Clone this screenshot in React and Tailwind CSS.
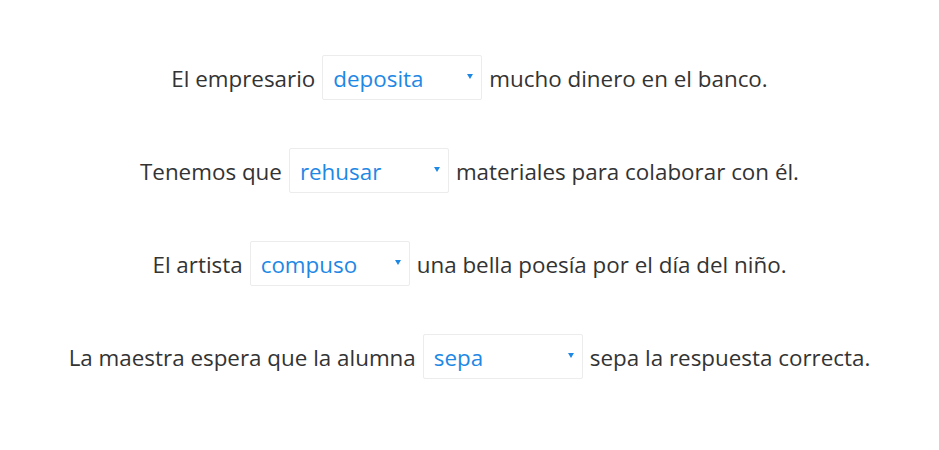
const ROWS = [
  { before: 'El empresario', value: 'deposita', after: 'mucho dinero en el banco.' },
  { before: 'Tenemos que', value: 'rehusar', after: 'materiales para colaborar con él.' },
  { before: 'El artista', value: 'compuso', after: 'una bella poesía por el día del niño.' },
  { before: 'La maestra espera que la alumna', value: 'sepa', after: 'sepa la respuesta correcta.' },
];

const Select = ({ value }) => (
  <div className="relative w-[160px] h-[45px] flex items-center pl-[10px] pt-[3px] border border-[#ececec] rounded-[2px] bg-white text-[#1e88e5]">
    <span>{value}</span>
    <svg
      className="absolute right-[8px] top-[18px]"
      width="6"
      height="5"
      viewBox="0 0 6 5"
      aria-hidden
    >
      <path d="M0 0h6L3 5z" fill="#1e88e5" />
    </svg>
  </div>
);

export default function App() {
  return (
    <div
      className="w-[939px] h-[450px] bg-white pt-[55px] flex flex-col gap-[48px] text-[22.4px] text-[#333]"
      style={{ fontFamily: '"Open Sans", "Noto Sans", sans-serif' }}
    >
      {ROWS.map((row) => (
        <div key={row.value} className="flex items-center justify-center gap-[7px]">
          <span className="pt-[3px]">{row.before}</span>
          <Select value={row.value} />
          <span className="pt-[3px]">{row.after}</span>
        </div>
      ))}
    </div>
  );
}
